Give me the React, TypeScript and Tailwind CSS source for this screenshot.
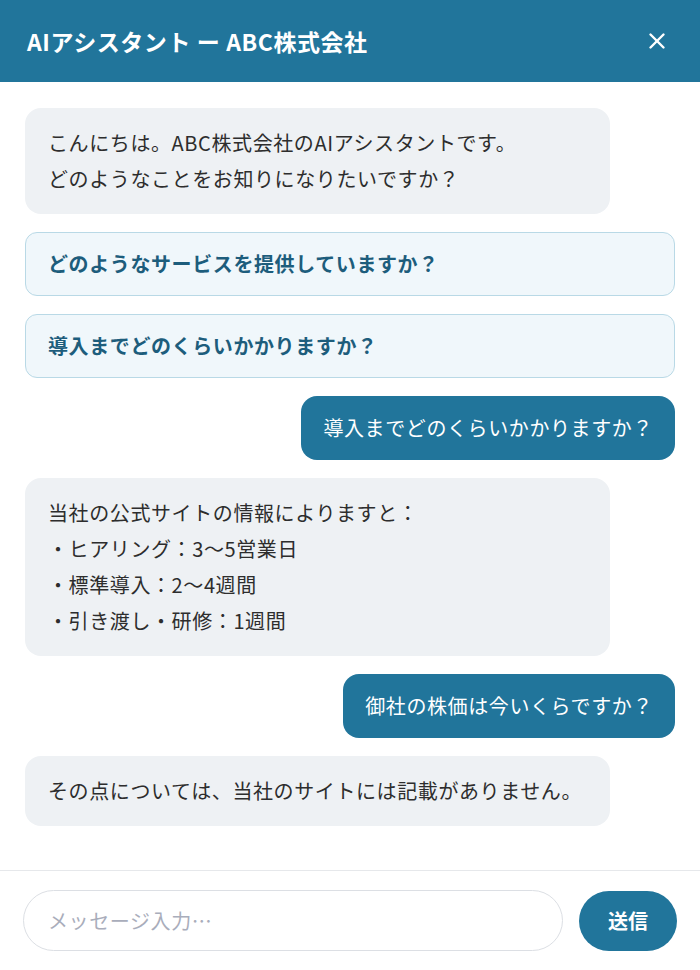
import React from 'react';
import { X } from 'lucide-react';

const font = { fontFamily: '"Noto Sans CJK JP", "Noto Sans", sans-serif' };

const suggestions = ['どのようなサービスを提供していますか？', '導入までどのくらいかかりますか？'];

const AssistantBubble = ({ lines }: { lines: string[] }) => (
    <div className="w-[90%] self-start rounded-2xl bg-[#eef1f4] py-[17px] pl-[23px] pr-6 text-[20px] leading-[36px] tracking-[0.03em] text-[#2d2d2d]">
        {lines.map((l, i) => (
            <div key={i}>{l}</div>
        ))}
    </div>
);

const UserBubble = ({ text }: { text: string }) => (
    <div className="self-end rounded-2xl bg-[#21759b] px-[22px] py-[14px] text-[20px] leading-[36px] tracking-[0.03em] text-white">
        {text}
    </div>
);

export default function App() {
    return (
        <div className="flex h-[970px] w-[700px] flex-col bg-white" style={font}>
            {/* Header */}
            <div className="flex h-[82px] shrink-0 items-center justify-between bg-[#21759b] pl-[27px] pr-[30px]">
                <h1 className="text-[23px] font-bold tracking-[0.025em] text-white">AIアシスタント ー ABC株式会社</h1>
                <button className="text-white" aria-label="閉じる">
                    <X size={26} strokeWidth={2.25} />
                </button>
            </div>

            {/* Messages */}
            <div className="flex flex-1 flex-col gap-[18px] overflow-hidden px-[25px] pt-[26px]">
                <AssistantBubble lines={['こんにちは。ABC株式会社のAIアシスタントです。', 'どのようなことをお知りになりたいですか？']} />
                {suggestions.map((s) => (
                    <button
                        key={s}
                        className="rounded-xl border border-[#b9d9e6] bg-[#f0f7fb] py-[13px] pl-[22px] pr-6 text-left text-[20px] font-bold leading-[36px] tracking-[0.03em] text-[#1d5d7c]"
                    >
                        {s}
                    </button>
                ))}
                <UserBubble text="導入までどのくらいかかりますか？" />
                <AssistantBubble
                    lines={['当社の公式サイトの情報によりますと：', '・ヒアリング：3〜5営業日', '・標準導入：2〜4週間', '・引き渡し・研修：1週間']}
                />
                <UserBubble text="御社の株価は今いくらですか？" />
                <AssistantBubble lines={['その点については、当社のサイトには記載がありません。']} />
            </div>

            {/* Input */}
            <div className="flex shrink-0 items-center gap-4 border-t border-[#e6e8eb] px-[23px] py-[19px]">
                <input
                    className="h-[61px] flex-1 rounded-full border border-[#dcdfe4] px-6 text-[20px] tracking-[0.03em] text-[#333] outline-none placeholder:text-[#a9adbb]"
                    placeholder="メッセージ入力…"
                />
                <button className="h-[60px] w-[98px] rounded-full bg-[#21759b] text-[20px] font-bold text-white">
                    送信
                </button>
            </div>
        </div>
    );
}
